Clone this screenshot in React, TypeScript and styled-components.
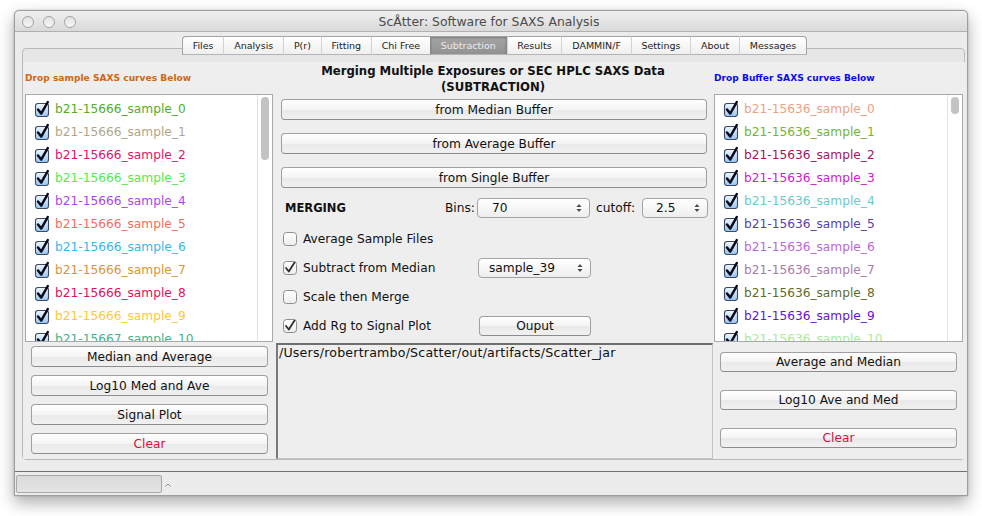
import React from "react";
import styled, { createGlobalStyle } from "styled-components";

const Global = createGlobalStyle`
  html, body { margin: 0; padding: 0; background: #ffffff; }
  body { font-family: "DejaVu Sans", "Liberation Sans", sans-serif; }
  * { box-sizing: border-box; }
`;

const Page = styled.div`
  width: 982px;
  height: 516px;
  padding: 10px 0 0 14px;
  overflow: hidden;
`;

const Window = styled.div`
  width: 954px;
  height: 486px;
  display: flex;
  flex-direction: column;
  background: #ececec;
  border: 1px solid #9e9e9e;
  border-radius: 5px 5px 0 0;
  box-shadow: 0 7px 16px rgba(0, 0, 0, 0.32), 0 0 2px rgba(0, 0, 0, 0.25);
  overflow: hidden;
`;

const TitleBar = styled.div`
  height: 21px;
  flex: none;
  position: relative;
  display: flex;
  align-items: center;
  justify-content: center;
  background: linear-gradient(#f0f0f0, #d9d9d9);
  border-bottom: 1px solid #b1b1b1;
  border-radius: 5px 5px 0 0;
`;

const Lights = styled.div`
  position: absolute;
  left: 7px;
  top: 5px;
  display: flex;
  gap: 9px;
`;

const Light = styled.span`
  width: 12px;
  height: 12px;
  border-radius: 50%;
  border: 1px solid #a3a3a3;
  background: linear-gradient(#e2e2e2, #f7f7f7);
`;

const Title = styled.span`
  font-size: 12.4px;
  color: #4b4b4b;
  margin-left: -4px;
`;

const Body = styled.div`
  flex: 1;
  display: flex;
  flex-direction: column;
  padding: 4px 2px 0 7px;
`;

const TabStrip = styled.div`
  display: flex;
  justify-content: center;
  height: 19px;
  margin-bottom: -7px;
  position: relative;
  z-index: 1;
  padding-left: 2px;
`;

const Tab = styled.div<{ $active?: boolean; $first?: boolean; $last?: boolean }>`
  height: 19px;
  padding: 0 9.8px;
  display: flex;
  align-items: center;
  font-size: 9.5px;
  color: ${(p) => (p.$active ? "#ededed" : "#1c1c1c")};
  background: ${(p) =>
    p.$active ? "linear-gradient(#a4a4a4, #929292)" : "linear-gradient(#ffffff, #efefef)"};
  border-top: 1px solid #a2a2a2;
  border-bottom: 1px solid #b4b4b4;
  border-left: 1px solid ${(p) => (p.$first ? "#a2a2a2" : p.$active ? "#8a8a8a" : "#d2d2d2")};
  border-right: ${(p) => (p.$last ? "1px solid #a2a2a2" : p.$active ? "1px solid #8a8a8a" : "none")};
  border-radius: ${(p) => (p.$first ? "4px 0 0 0" : p.$last ? "0 4px 0 0" : "0")};
  box-shadow: ${(p) => (p.$active ? "inset 0 1px 2px rgba(0,0,0,0.25)" : "none")};
`;

const Pane = styled.div`
  height: 412px;
  flex: none;
  border: 1px solid #b9b9b9;
  border-radius: 4px;
  background: #e6e6e6;
  padding-top: 13px;
  display: flex;
`;

const Inner = styled.div`
  flex: 1;
  background: #eeeeee;
  display: grid;
  grid-template-columns: 252px 438px 252px;
`;

const Column = styled.div`
  display: flex;
  flex-direction: column;
  min-height: 0;
`;

const DropLabel = styled.div<{ $color: string; $pad: number }>`
  height: 32px;
  display: flex;
  align-items: center;
  padding-left: ${(p) => p.$pad}px;
  padding-bottom: 1px;
  font-size: 9.1px;
  font-weight: bold;
  color: ${(p) => p.$color};
`;

const ListBox = styled.div<{ $ml: number; $mr: number }>`
  height: 248px;
  flex: none;
  margin: 0 ${(p) => p.$mr}px 0 ${(p) => p.$ml}px;
  background: #ffffff;
  border: 1px solid #a9a9a9;
  display: flex;
  overflow: hidden;
`;

const Items = styled.div`
  flex: 1;
  padding-top: 2px;
  overflow: hidden;
`;

const Item = styled.div<{ $color: string }>`
  height: 23px;
  display: flex;
  align-items: center;
  gap: 5px;
  padding-left: 8px;
  font-size: 12.2px;
  color: ${(p) => p.$color};
  white-space: nowrap;
`;

const Track = styled.div`
  width: 15px;
  flex: none;
  border-left: 1px solid #e2e2e2;
  padding: 2px 0 0 3px;
`;

const Thumb = styled.div<{ $h: number }>`
  width: 8px;
  height: ${(p) => p.$h}px;
  border-radius: 4px;
  background: #c3c3c3;
`;

const ButtonStack = styled.div<{ $pt: number; $gap: number; $pl: number; $pr: number }>`
  display: flex;
  flex-direction: column;
  gap: ${(p) => p.$gap}px;
  padding: ${(p) => p.$pt}px ${(p) => p.$pr}px 0 ${(p) => p.$pl}px;
`;

const Button = styled.div<{ $danger?: boolean; $h?: number }>`
  height: ${(p) => p.$h ?? 21}px;
  flex: none;
  display: flex;
  align-items: center;
  justify-content: center;
  border: 1px solid #a0a0a0;
  border-bottom-color: #8c8c8c;
  border-radius: 4px;
  background: linear-gradient(#ffffff 0%, #f4f4f4 50%, #e9e9e9 51%, #f1f1f1 100%);
  font-size: 12.2px;
  color: ${(p) => (p.$danger ? "#d3123f" : "#111111")};
  white-space: nowrap;
`;

const OutputButton = styled(Button)`
  width: 112px;
  margin-left: 1px;
`;

const CenterTitle = styled.div`
  padding-top: 1px;
  text-align: center;
  font-weight: bold;
  font-size: 11.7px;
  line-height: 16px;
  color: #111;
  padding-right: 2px;
  white-space: nowrap;
`;

const CenterButtons = styled.div`
  display: flex;
  flex-direction: column;
  gap: 13px;
  margin: 4px 6px 0 6px;
`;

const Controls = styled.div`
  display: flex;
  flex-direction: column;
  gap: 9px;
  margin-top: 10px;
`;

const MergeRow = styled.div`
  height: 20px;
  display: flex;
  align-items: center;
  padding-left: 10px;
  margin-bottom: 2px;
`;

const MergeTitle = styled.span`
  width: 160px;
  font-size: 11.5px;
  font-weight: bold;
  color: #111;
`;

const SmallLabel = styled.span<{ $w: number; $pl?: number }>`
  width: ${(p) => p.$w}px;
  padding-left: ${(p) => p.$pl ?? 0}px;
  font-size: 12.2px;
  color: #111;
`;

const Select = styled.div<{ $w: number; $pl: number }>`
  width: ${(p) => p.$w}px;
  height: 20px;
  flex: none;
  display: flex;
  align-items: center;
  justify-content: space-between;
  padding: 0 7px 0 ${(p) => p.$pl}px;
  border: 1px solid #a3a3a3;
  border-radius: 4px;
  background: linear-gradient(#ffffff, #eeeeee);
  font-size: 12.2px;
  color: #111;
`;

const CheckRow = styled.div`
  height: 20px;
  display: flex;
  align-items: center;
  padding-left: 8px;
`;

const CheckLabel = styled.span`
  width: 175px;
  margin-left: 6px;
  font-size: 12.2px;
  color: #111;
  white-space: nowrap;
`;

const OutputArea = styled.div`
  flex: 1;
  margin: 7px 0 0 1px;
  border: 1px solid #c4c4c4;
  border-top: 2px solid #6f6f6f;
  border-left: 2px solid #7a7a7a;
  background: #eeeeee;
  font-size: 12.6px;
  color: #111;
  padding: 0 0 0 1px;
  letter-spacing: 0.2px;
  white-space: nowrap;
`;

const StatusBar = styled.div`
  margin: 11px -2px 0 -7px;
  flex: 1;
  border-top: 1px solid #717171;
  display: flex;
  align-items: flex-start;
  padding: 3px 0 0 1px;
  gap: 3px;
`;

const StatusField = styled.div`
  width: 146px;
  height: 18px;
  border: 1px solid #a8a8a8;
  border-radius: 2px;
  background: linear-gradient(#dadada, #e4e4e4);
`;

const Caret = styled.svg`
  margin-top: 8px;
`;

const AquaCheck = () => (
  <svg width="16" height="17" viewBox="0 0 16 17">
    <defs>
      <linearGradient id="aquaG" x1="0" y1="0" x2="0" y2="1">
        <stop offset="0" stopColor="#f0f7ff" />
        <stop offset="1" stopColor="#95c6f2" />
      </linearGradient>
    </defs>
    <rect x="1.5" y="3.5" width="13" height="13" rx="2.5" fill="url(#aquaG)" stroke="#3d4866" strokeWidth="1.1" />
    <path d="M4 9.5 L7.2 13.6 L13.8 2" fill="none" stroke="#0a0a18" strokeWidth="2.5" strokeLinecap="round" strokeLinejoin="round" />
  </svg>
);

const PlainCheck = ({ checked }: { checked?: boolean }) => (
  <svg width="14" height="14" viewBox="0 0 14 14">
    <defs>
      <linearGradient id="plainG" x1="0" y1="0" x2="0" y2="1">
        <stop offset="0" stopColor="#ffffff" />
        <stop offset="1" stopColor="#ececec" />
      </linearGradient>
    </defs>
    <rect x="0.5" y="0.5" width="13" height="13" rx="3" fill="url(#plainG)" stroke="#8e8e8e" />
    {checked && (
      <path d="M3 7 L5.8 10.5 L11.5 1.5" fill="none" stroke="#2e2e2e" strokeWidth="1.8" strokeLinecap="round" strokeLinejoin="round" />
    )}
  </svg>
);

const Arrows = () => (
  <svg width="6" height="10" viewBox="0 0 6 10">
    <path d="M3 1 L5.5 4 H0.5 Z" fill="#4a4a4a" />
    <path d="M3 9 L5.5 6 H0.5 Z" fill="#4a4a4a" />
  </svg>
);

const sampleColors = [
  "#4fae2a",
  "#b1a689",
  "#e0126c",
  "#55e855",
  "#b045ea",
  "#f0705e",
  "#35b9ea",
  "#d8943e",
  "#e0125c",
  "#fdc936",
  "#3fb48a",
];

const bufferColors = [
  "#eda184",
  "#74b534",
  "#a3155f",
  "#cc22cc",
  "#68cbcb",
  "#5743a8",
  "#bb66dd",
  "#a97ba9",
  "#5f6e2c",
  "#6612dd",
  "#a9ec98",
];

const tabs = [
  "Files",
  "Analysis",
  "P(r)",
  "Fitting",
  "Chi Free",
  "Subtraction",
  "Results",
  "DAMMIN/F",
  "Settings",
  "About",
  "Messages",
];

export default function App() {
  return (
    <Page>
      <Global />
      <Window>
        <TitleBar>
          <Lights>
            <Light />
            <Light />
            <Light />
          </Lights>
          <Title>ScÅtter: Software for SAXS Analysis</Title>
        </TitleBar>
        <Body>
          <TabStrip>
            {tabs.map((t, i) => (
              <Tab key={t} $active={t === "Subtraction"} $first={i === 0} $last={i === tabs.length - 1}>
                {t}
              </Tab>
            ))}
          </TabStrip>
          <Pane>
            <Inner>
              <Column>
                <DropLabel $color="#d2670f" $pad={2}>Drop sample SAXS curves Below</DropLabel>
                <ListBox $ml={2} $mr={2}>
                  <Items>
                    {sampleColors.map((c, i) => (
                      <Item key={i} $color={c}>
                        <AquaCheck />
                        {i === 10 ? "b21-15667_sample_10" : `b21-15666_sample_${i}`}
                      </Item>
                    ))}
                  </Items>
                  <Track>
                    <Thumb $h={63} />
                  </Track>
                </ListBox>
                <ButtonStack $pt={4} $gap={8} $pl={8} $pr={7}>
                  <Button>Median and Average</Button>
                  <Button>Log10 Med and Ave</Button>
                  <Button>Signal Plot</Button>
                  <Button $danger>Clear</Button>
                </ButtonStack>
              </Column>

              <Column>
                <CenterTitle>
                  Merging Multiple Exposures or SEC HPLC SAXS Data
                  <br />
                  (SUBTRACTION)
                </CenterTitle>
                <CenterButtons>
                  <Button>from Median Buffer</Button>
                  <Button>from Average Buffer</Button>
                  <Button>from Single Buffer</Button>
                </CenterButtons>
                <Controls>
                  <MergeRow>
                    <MergeTitle>MERGING</MergeTitle>
                    <SmallLabel $w={32}>Bins:</SmallLabel>
                    <Select $w={113} $pl={14}>
                      70
                      <Arrows />
                    </Select>
                    <SmallLabel $w={52} $pl={6}>cutoff:</SmallLabel>
                    <Select $w={66} $pl={13}>
                      2.5
                      <Arrows />
                    </Select>
                  </MergeRow>
                  <CheckRow>
                    <PlainCheck />
                    <CheckLabel>Average Sample Files</CheckLabel>
                  </CheckRow>
                  <CheckRow>
                    <PlainCheck checked />
                    <CheckLabel>Subtract from Median</CheckLabel>
                    <Select $w={113} $pl={10}>
                      sample_39
                      <Arrows />
                    </Select>
                  </CheckRow>
                  <CheckRow>
                    <PlainCheck />
                    <CheckLabel>Scale then Merge</CheckLabel>
                  </CheckRow>
                  <CheckRow>
                    <PlainCheck checked />
                    <CheckLabel>Add Rg to Signal Plot</CheckLabel>
                    <OutputButton $h={20}>Ouput</OutputButton>
                  </CheckRow>
                </Controls>
                <OutputArea>/Users/robertrambo/Scatter/out/artifacts/Scatter_jar</OutputArea>
              </Column>

              <Column>
                <DropLabel $color="#0a0af0" $pad={1}>Drop Buffer SAXS curves Below</DropLabel>
                <ListBox $ml={1} $mr={2}>
                  <Items>
                    {bufferColors.map((c, i) => (
                      <Item key={i} $color={c}>
                        <AquaCheck />
                        {`b21-15636_sample_${i}`}
                      </Item>
                    ))}
                  </Items>
                  <Track>
                    <Thumb $h={17} />
                  </Track>
                </ListBox>
                <ButtonStack $pt={10} $gap={18} $pl={7} $pr={8}>
                  <Button $h={20}>Average and Median</Button>
                  <Button $h={20}>Log10 Ave and Med</Button>
                  <Button $h={20} $danger>Clear</Button>
                </ButtonStack>
              </Column>
            </Inner>
          </Pane>
          <StatusBar>
            <StatusField />
            <Caret width="6" height="4" viewBox="0 0 6 4">
              <path d="M0.5 3.5 L3 1 L5.5 3.5" fill="none" stroke="#8a8a8a" strokeWidth="1" />
            </Caret>
          </StatusBar>
        </Body>
      </Window>
    </Page>
  );
}
